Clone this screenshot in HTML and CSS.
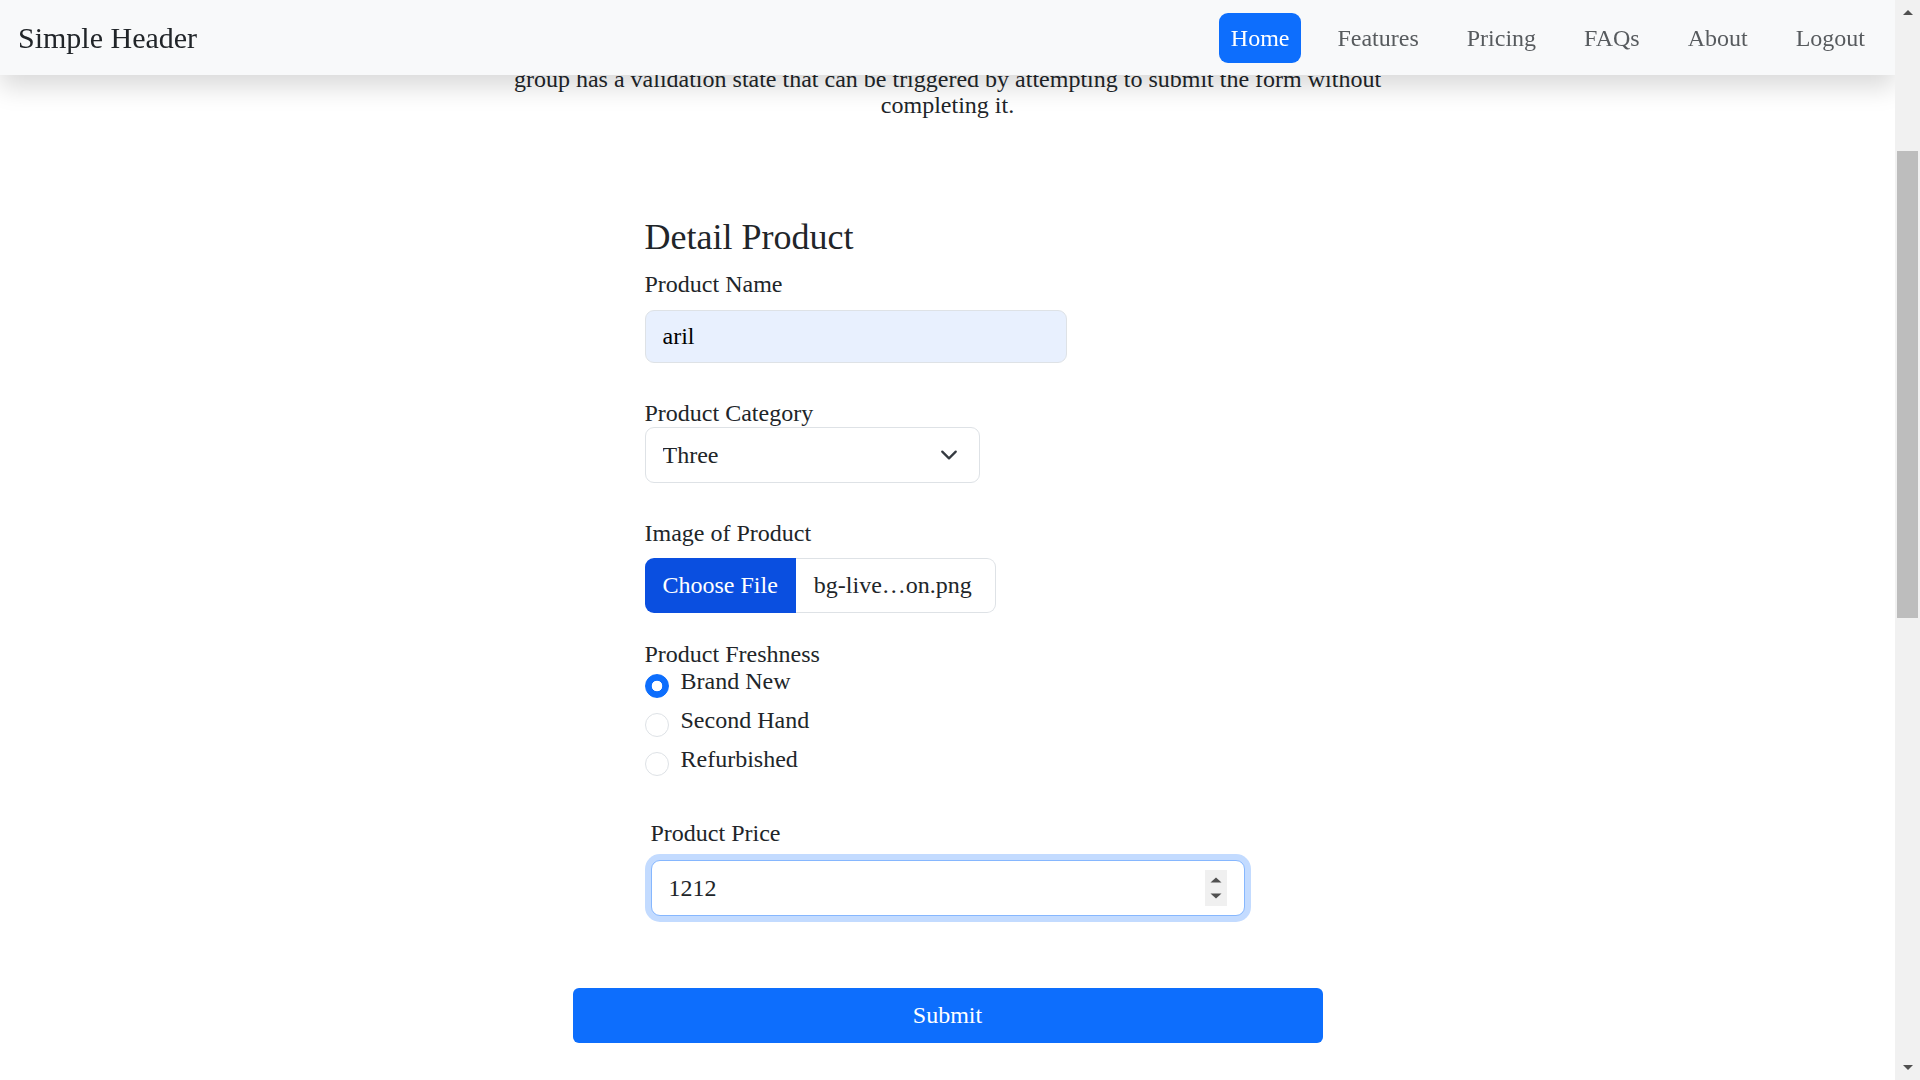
FILE: index.html
```html
<!DOCTYPE html>
<html lang="en">
<head>
<meta charset="utf-8">
<title>Simple Header – Detail Product</title>
<link rel="stylesheet" href="styles.css">
</head>
<body>
<div class="window">
  <div class="scroller" id="scroller">
    <header class="site-header">
      <span class="brand">Simple Header</span>
      <nav>
        <ul class="nav">
          <li><a class="nav-link active" href="#">Home</a></li>
          <li><a class="nav-link" href="#">Features</a></li>
          <li><a class="nav-link" href="#">Pricing</a></li>
          <li><a class="nav-link" href="#">FAQs</a></li>
          <li><a class="nav-link" href="#">About</a></li>
          <li><a class="nav-link" href="#">Logout</a></li>
        </ul>
      </nav>
    </header>

    <main class="page">
      <section class="intro">
        <p class="intro-text">group has a validation state that can be triggered by attempting to submit the form without completing it.</p>
      </section>

      <form class="product-form" onsubmit="return false;">
        <div class="form-col">
          <h4 class="form-title">Detail Product</h4>

          <div class="field field-name">
            <label class="label label-gap" for="pname">Product Name</label>
            <input class="text-input autofilled" id="pname" type="text" value="aril">
          </div>

          <div class="field field-category">
            <label class="label" for="pcat">Product Category</label>
            <div class="select-box">
              <select class="select" id="pcat">
                <option>One</option>
                <option>Two</option>
                <option selected>Three</option>
              </select>
              <svg class="chevron" viewBox="0 0 16 16" width="18" height="18" aria-hidden="true">
                <path d="m2 5 6 6 6-6" fill="none" stroke="#343a40" stroke-width="2" stroke-linecap="round" stroke-linejoin="round"/>
              </svg>
            </div>
          </div>

          <div class="field field-image">
            <label class="label label-gap-file">Image of Product</label>
            <div class="file-box">
              <span class="file-btn">Choose File</span>
              <span class="file-name">bg-live…on.png</span>
            </div>
          </div>

          <div class="field field-fresh">
            <span class="label">Product Freshness</span>
            <label class="radio-row"><input class="radio" type="radio" name="fresh" checked><span>Brand New</span></label>
            <label class="radio-row"><input class="radio" type="radio" name="fresh"><span>Second Hand</span></label>
            <label class="radio-row"><input class="radio" type="radio" name="fresh"><span>Refurbished</span></label>
          </div>

          <div class="price-group">
            <label class="label label-gap-price" for="pprice">Product Price</label>
            <div class="number-box">
              <input class="number-input" id="pprice" type="number" value="1212">
              <svg class="spinner" viewBox="0 0 22 36" width="22" height="36" aria-hidden="true">
                <rect width="22" height="36" fill="#f0f0f0"/>
                <polygon points="5.5,12.5 16.5,12.5 11,7.5" fill="#505050"/>
                <polygon points="5.5,23.5 16.5,23.5 11,28.5" fill="#505050"/>
              </svg>
            </div>
          </div>
        </div>

        <div class="submit-row">
          <button class="submit-btn" type="submit">Submit</button>
        </div>
      </form>
    </main>
  </div>
</div>

<div class="scrollbar" aria-hidden="true">
  <div class="sb-btn">
    <svg viewBox="0 0 10 5" width="10" height="5"><polygon points="0,5 10,5 5,0" fill="#505050"/></svg>
  </div>
  <div class="sb-before"></div>
  <div class="sb-thumb"></div>
  <div class="sb-after"></div>
  <div class="sb-btn">
    <svg viewBox="0 0 10 5" width="10" height="5"><polygon points="0,0 10,0 5,5" fill="#505050"/></svg>
  </div>
</div>

<script src="script.js"></script>
</body>
</html>
```

FILE: styles.css
```css
* { box-sizing: border-box; }

html { background: #fff; }

body {
  margin: 0;
  height: 1080px;
  overflow: hidden;
  display: flex;
  font-family: "Liberation Serif", "Times New Roman", serif;
  font-size: 24px;
  color: #212529;
  background: #fff;
}

/* ---------- window / scroll area ---------- */
.window {
  flex: 1;
  min-width: 0;
  height: 1080px;
}

.scroller {
  height: 100%;
  overflow: hidden;
}

/* ---------- drawn scrollbar ---------- */
.scrollbar {
  flex: none;
  width: 25px;
  height: 1080px;
  display: flex;
  flex-direction: column;
  background: #f1f1f1;
}

.sb-btn {
  flex: none;
  height: 25px;
  display: flex;
  align-items: center;
  justify-content: center;
}

.sb-before { flex: none; height: 126px; }

.sb-thumb {
  flex: none;
  height: 467px;
  margin: 0 2px;
  background: #bdbdbd;
}

.sb-after { flex: 1; }

/* ---------- header ---------- */
.site-header {
  position: sticky;
  top: 0;
  z-index: 10;
  height: 75px;
  display: flex;
  align-items: center;
  justify-content: space-between;
  padding: 0 18px;
  background: #f8f9fa;
  box-shadow: 0 12px 24px rgba(0, 0, 0, 0.15);
}

.brand {
  font-size: 30px;
  line-height: 36px;
  color: #212529;
}

.nav {
  display: flex;
  gap: 24px;
  margin: 0;
  padding: 0;
  list-style: none;
}

.nav-link {
  display: block;
  height: 50px;
  line-height: 50px;
  padding: 0 12px;
  border-radius: 9px;
  font-size: 24px;
  color: rgba(33, 37, 41, 0.75);
  text-decoration: none;
}

.nav-link.active {
  background: #0d6efd;
  color: #fff;
}

/* ---------- page ---------- */
.page {
  padding-bottom: 1050px;
}

.intro {
  padding-top: 282px;
  text-align: center;
}

.intro-text {
  max-width: 912px;
  margin: 0 auto;
  font-size: 24px;
  line-height: 26px;
  color: #212529;
}

/* ---------- form ---------- */
.product-form {
  margin-top: 98px;
}

.form-col {
  width: 606px;
  margin: 0 auto;
}

.form-title {
  margin: 0 0 12px;
  font-size: 36px;
  line-height: 43px;
  font-weight: 400;
}

.label {
  display: block;
  font-size: 24px;
  line-height: 27px;
  color: #212529;
}

.label-gap { margin-bottom: 12px; }
.label-gap-file { margin-bottom: 11px; }
.label-gap-price { margin-bottom: 13px; }

.field-name,
.field-category { margin-bottom: 37px; }
.field-image { margin-bottom: 28px; }
.field-fresh { margin-bottom: 29px; }

.text-input {
  display: block;
  width: 422px;
  height: 53px;
  padding: 0 17px;
  border: 1px solid #dee2e6;
  border-radius: 9px;
  font: inherit;
  font-size: 24px;
  color: #000;
  outline: none;
}

.autofilled { background: #e8f0fe; }

.select-box {
  display: flex;
  align-items: center;
  width: 335px;
  height: 56px;
  padding-right: 21px;
  border: 1px solid #dee2e6;
  border-radius: 9px;
  background: #fff;
}

.select {
  flex: 1;
  height: 100%;
  padding: 0 0 0 17px;
  border: 0;
  background: transparent;
  font: inherit;
  font-size: 24px;
  color: #212529;
  appearance: none;
  -webkit-appearance: none;
  outline: none;
}

.chevron { flex: none; }

.file-box {
  display: flex;
  width: 351px;
  height: 55px;
}

.file-btn {
  display: flex;
  align-items: center;
  padding: 0 18px;
  background: #0a4fe0;
  color: #fff;
  border-radius: 9px 0 0 9px;
}

.file-name {
  flex: 1;
  display: flex;
  align-items: center;
  padding-left: 18px;
  border: 1px solid #dee2e6;
  border-left: 0;
  border-radius: 0 9px 9px 0;
  color: #212529;
}

.radio-row {
  display: flex;
  align-items: flex-start;
  height: 39px;
  line-height: 27px;
}

.radio {
  flex: none;
  width: 24px;
  height: 24px;
  margin: 6px 12px 0 0;
  border: 1px solid #dee2e6;
  border-radius: 50%;
  background: #fff;
  appearance: none;
  -webkit-appearance: none;
}

.radio:checked {
  border-color: #0d6efd;
  background: radial-gradient(circle, #fff 0, #fff 5px, #0d6efd 5.6px);
}

.price-group {
  padding: 6px;
}

.number-box {
  display: flex;
  align-items: center;
  height: 56px;
  padding: 0 17px;
  border: 1px solid #86b7fe;
  border-radius: 9px;
  background: #fff;
  box-shadow: 0 0 0 6px #c3dbff;
}

.number-input {
  flex: 1;
  min-width: 0;
  height: 100%;
  padding: 0;
  border: 0;
  background: transparent;
  font: inherit;
  font-size: 24px;
  color: #212529;
  outline: none;
  -moz-appearance: textfield;
}

.number-input::-webkit-inner-spin-button,
.number-input::-webkit-outer-spin-button {
  -webkit-appearance: none;
  margin: 0;
}

.spinner { flex: none; }

.submit-row {
  margin-top: 66px;
}

.submit-btn {
  display: block;
  width: 750px;
  height: 55px;
  margin: 0 auto;
  border: 0;
  border-radius: 6px;
  background: #0d6efd;
  color: #fff;
  font: inherit;
  font-size: 24px;
}
```

FILE: script.js
```js
(function () {
  var scroller = document.getElementById('scroller');
  function place() { scroller.scrollTop = 291; }
  place();
  window.addEventListener('load', place);
})();
```
